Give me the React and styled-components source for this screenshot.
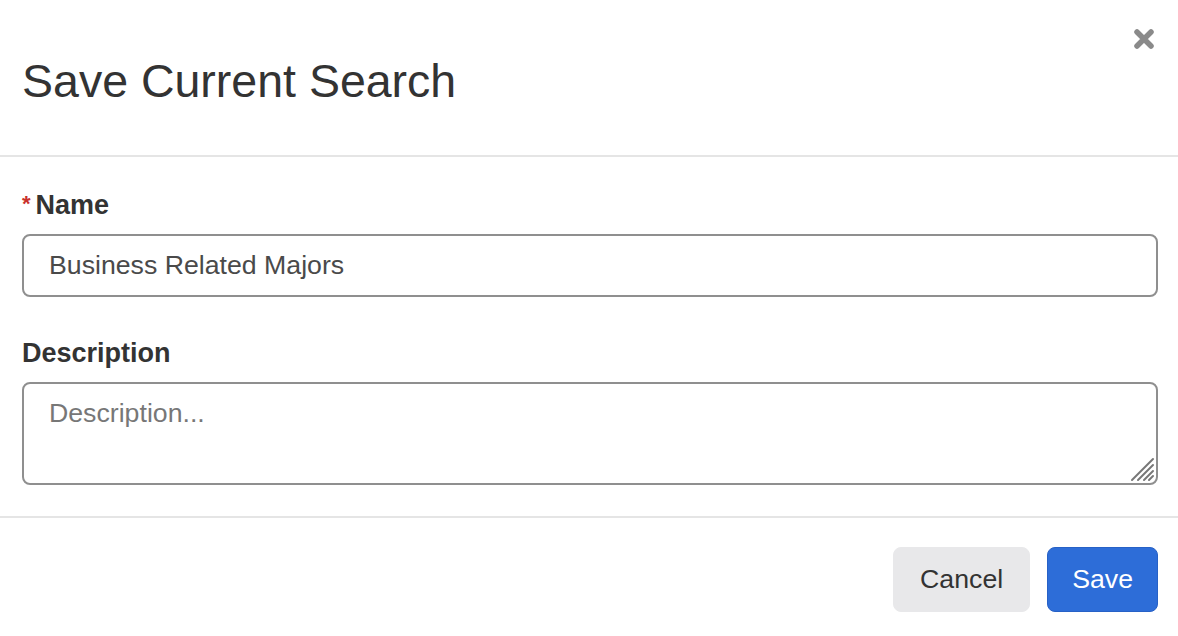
import React from 'react';
import styled, {createGlobalStyle} from 'styled-components';

const GlobalStyle = createGlobalStyle`
  html, body {
    margin: 0;
    padding: 0;
    background: #ffffff;
  }
  body {
    font-family: "Liberation Sans", Arial, Helvetica, sans-serif;
    color: #333333;
  }
  * {
    box-sizing: border-box;
  }
`;

const Modal = styled.div`
  width: 1178px;
  height: 636px;
  background: #ffffff;
  display: flex;
  flex-direction: column;
`;

const Header = styled.div`
  display: flex;
  justify-content: space-between;
  align-items: flex-start;
  height: 157px;
  padding: 28px 23px 0 22px;
  border-bottom: 2px solid #e5e5e5;
`;

const Title = styled.h3`
  margin: 30px 0 0;
  font-size: 46.5px;
  line-height: 1;
  font-weight: 400;
  color: #333333;
`;

const CloseButton = styled.button`
  width: 22px;
  height: 22px;
  padding: 0;
  border: 0;
  background: transparent;
  cursor: pointer;
  display: flex;
`;

const Body = styled.div`
  display: flex;
  flex-direction: column;
  gap: 43px;
  padding: 33px 20px 31px 22px;
  border-bottom: 2px solid #e5e5e5;
`;

const Field = styled.div`
  display: flex;
  flex-direction: column;
  gap: 15px;
`;

const Label = styled.label`
  font-size: 27px;
  line-height: 27px;
  font-weight: 700;
  color: #333333;
`;

const Required = styled.span`
  color: #c9302c;
  font-size: 22px;
  margin-right: 5px;
  vertical-align: 3px;
`;

const TextInput = styled.input`
  width: 100%;
  height: 63px;
  padding: 0 25px;
  border: 2px solid #8f8f8f;
  border-radius: 8px;
  font-family: inherit;
  font-size: 26.7px;
  color: #4a4a4a;
  background: #ffffff;
  outline: none;
`;

const AreaWrap = styled.div`
  position: relative;
  display: flex;
`;

const TextArea = styled.textarea`
  width: 100%;
  height: 103px;
  padding: 11px 25px;
  border: 2px solid #8f8f8f;
  border-radius: 8px;
  font-family: inherit;
  font-size: 26.7px;
  line-height: 36px;
  color: #4a4a4a;
  background: #ffffff;
  resize: none;
  outline: none;

  &::placeholder {
    color: #777777;
  }
`;

const Grip = styled.svg`
  position: absolute;
  right: 3px;
  bottom: 3px;
  pointer-events: none;
`;

const Footer = styled.div`
  display: flex;
  justify-content: flex-end;
  gap: 17px;
  padding: 29px 20px 0 22px;
`;

const Button = styled.button`
  height: 65px;
  padding: 0 ${p => (p.$primary ? '24px' : '26px')};
  border-radius: 8px;
  font-family: inherit;
  font-size: 26.7px;
  cursor: pointer;
  border: 1px solid ${p => (p.$primary ? '#2761c6' : '#e8e8ea')};
  background: ${p => (p.$primary ? '#2d6dd8' : '#e8e8ea')};
  color: ${p => (p.$primary ? '#ffffff' : '#333333')};
`;

export default function App() {
  return (
    <>
      <GlobalStyle />
      <Modal>
        <Header>
          <Title>Save Current Search</Title>
          <CloseButton aria-label="Close">
            <svg width="22" height="22" viewBox="0 0 22 22">
              <path
                d="M4 4 L18 18 M18 4 L4 18"
                stroke="#8a8a8a"
                strokeWidth="5.5"
                strokeLinecap="round"
              />
            </svg>
          </CloseButton>
        </Header>
        <Body>
          <Field>
            <Label>
              <Required>*</Required>Name
            </Label>
            <TextInput defaultValue="Business Related Majors" />
          </Field>
          <Field>
            <Label>Description</Label>
            <AreaWrap>
              <TextArea placeholder="Description..." />
              <Grip width="26" height="26" viewBox="0 0 26 26">
                <g stroke="#777777" strokeWidth="2" strokeLinecap="round">
                  <path d="M3 24 L24 3" />
                  <path d="M9 24 L24 9" />
                  <path d="M15 24 L24 15" />
                  <path d="M20 24 L24 20" />
                </g>
              </Grip>
            </AreaWrap>
          </Field>
        </Body>
        <Footer>
          <Button>Cancel</Button>
          <Button $primary>Save</Button>
        </Footer>
      </Modal>
    </>
  );
}
